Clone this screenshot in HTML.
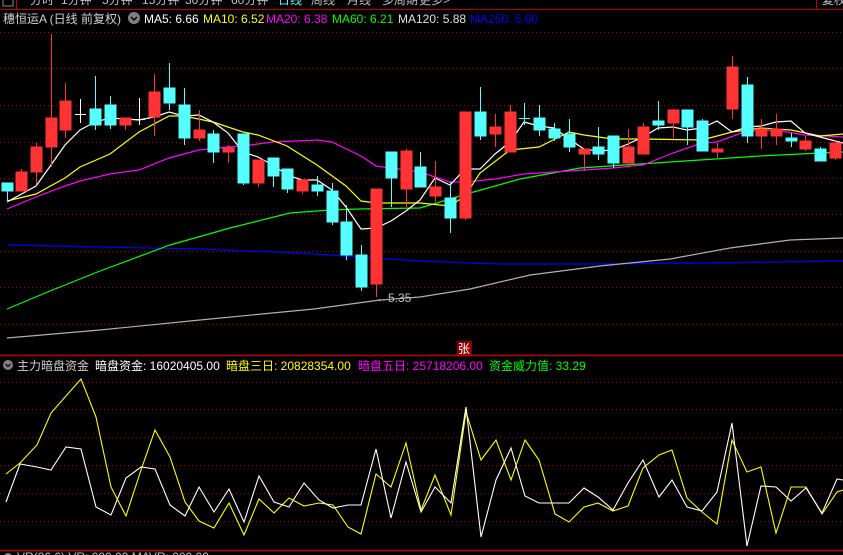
<!DOCTYPE html>
<html><head><meta charset="utf-8"><style>
html,body{margin:0;padding:0;background:#000;width:843px;height:555px;overflow:hidden}
svg{display:block}
text{font-family:"Liberation Sans","Noto Sans CJK SC",sans-serif;font-size:12px}
</style></head><body>
<svg width="843" height="555" viewBox="0 0 843 555" xmlns="http://www.w3.org/2000/svg">
<rect width="843" height="555" fill="#000"/>
<!-- top menu -->
<g fill="#c0c0c0" font-size="12">
<text x="30" y="4">分时</text><text x="61" y="4">1分钟</text><text x="102" y="4">5分钟</text><text x="142" y="4">15分钟</text><text x="185" y="4">30分钟</text><text x="231" y="4">60分钟</text><text x="278" y="4" fill="#55ffff">日线</text><text x="311" y="4">周线</text><text x="347" y="4">月线</text><text x="382" y="4">多周期</text><text x="419" y="4">更多&gt;</text>
<text x="822" y="4">复权</text></g>
<rect x="3" y="-4" width="10" height="10" fill="none" stroke="#888"/>
<line x1="0" y1="9.5" x2="843" y2="9.5" stroke="#c00000"/>
<line x1="816.5" y1="0" x2="816.5" y2="9" stroke="#c00000"/>
<line x1="16.5" y1="0" x2="16.5" y2="9" stroke="#c00000"/>
<!-- title -->
<text x="3" y="23" fill="#d0d0d0">穗恒运A (日线 前复权)</text>
<circle cx="134" cy="18" r="6" fill="#808080"/><path d="M131 17l3 3 3-3" stroke="#000" stroke-width="1.5" fill="none"/>
<text x="144" y="23" fill="#fff">MA5: 6.66</text>
<text x="203" y="23" fill="#ffff00">MA10: 6.52</text>
<text x="266" y="23" fill="#ff00ff">MA20: 6.38</text>
<text x="332" y="23" fill="#00ff00">MA60: 6.21</text>
<text x="398" y="23" fill="#e0e0e0">MA120: 5.88</text>
<text x="470" y="23" fill="#0000ff">MA250: 5.60</text>
<!-- grid -->
<g stroke="#b00000" stroke-dasharray="1,3">
<line x1="0" y1="32.5" x2="843" y2="32.5"/><line x1="0" y1="68.5" x2="843" y2="68.5"/><line x1="0" y1="105.5" x2="843" y2="105.5"/><line x1="0" y1="142.5" x2="843" y2="142.5"/><line x1="0" y1="178.5" x2="843" y2="178.5"/><line x1="0" y1="214.5" x2="843" y2="214.5"/><line x1="0" y1="251.5" x2="843" y2="251.5"/><line x1="0" y1="287.5" x2="843" y2="287.5"/><line x1="0" y1="324.5" x2="843" y2="324.5"/>
<line x1="0" y1="382.5" x2="843" y2="382.5"/><line x1="0" y1="409.5" x2="843" y2="409.5"/><line x1="0" y1="437.5" x2="843" y2="437.5"/><line x1="0" y1="465.5" x2="843" y2="465.5"/><line x1="0" y1="493.5" x2="843" y2="493.5"/><line x1="0" y1="521.5" x2="843" y2="521.5"/>
</g>
<!-- MA lines -->
<g fill="none" stroke-width="1.2">
<polyline stroke="#0000ff" points="7,245 100,247 200,249 300,253 420,261 500,264 600,264 700,263 843,261"/>
<polyline stroke="#b0b0b0" points="7,338 100,330 200,320 314,309 380,300 420,297 470,289 530,275 600,266 670,259 730,248 790,240 843,238"/>
<polyline stroke="#00ff00" points="7,309 50,291 100,271 170,245 230,228 290,213 330,210 360,209 420,208 470,193 520,179 580,168 640,164 700,160 760,156 800,154 843,152"/>
<polyline stroke="#ff00ff" points="7,209 36,197 65,186 80,181 110,174 139,170 169,158 199,150 228,147 243,146 273,142 317,140 332,142 361,156 376,166 406,170 420,172 450,182 465,182 495,179 524,174 554,172 584,170 613,168 643,165 673,153 702,143 717,142 747,131 776,130 805,135 843,137"/>
<polyline stroke="#ffff00" points="7,201 36,194 65,178 80,167 110,154 139,132 169,116 184,116 213,122 228,127 243,132 258,135 287,146 317,165 346,186 361,201 376,203 420,203 450,206 465,196 480,173 510,150 539,147 569,132 584,135 613,139 643,139 702,140 732,132 761,128 791,130 820,136 843,134"/>
<polyline stroke="#ffffff" points="7,202 36,186 51,165 65,145 80,130 95,122 110,118 125,119 139,120 154,117 169,112 184,116 199,115 213,122 228,133 243,152 258,157 273,165 287,175 302,180 317,180 332,190 346,207 361,229 376,228 391,221 406,211 420,200 435,178 450,185 465,169 480,169 495,154 510,142 524,122 539,126 554,128 569,139 584,149 598,151 613,150 628,144 643,137 658,128 673,127 687,130 702,128 717,121 732,132 747,127 761,126 776,122 791,121 805,133 820,137 843,143"/>
</g>
<!-- candles -->
<g stroke-width="1">
<g stroke="#55ffff" fill="#55ffff">
<line x1="7.5" y1="183" x2="7.5" y2="202"/><rect x="2" y="183" width="11" height="8"/>
<line x1="95.5" y1="76" x2="95.5" y2="130"/><rect x="90" y="109" width="11" height="16"/>
<line x1="110.5" y1="96" x2="110.5" y2="129"/><rect x="105" y="105" width="11" height="20"/>
<line x1="169.5" y1="63" x2="169.5" y2="110"/><rect x="164" y="88" width="11" height="15"/>
<line x1="184.5" y1="88" x2="184.5" y2="145"/><rect x="179" y="105" width="11" height="33"/>
<line x1="213.5" y1="130" x2="213.5" y2="163"/><rect x="208" y="134" width="11" height="18"/>
<line x1="243.5" y1="134" x2="243.5" y2="185"/><rect x="238" y="134" width="11" height="49"/>
<line x1="273.5" y1="158" x2="273.5" y2="187"/><rect x="268" y="158" width="11" height="18"/>
<line x1="287.5" y1="169" x2="287.5" y2="193"/><rect x="282" y="169" width="11" height="20"/>
<line x1="317.5" y1="176" x2="317.5" y2="196"/><rect x="312" y="185" width="11" height="6"/>
<line x1="332.5" y1="183" x2="332.5" y2="225"/><rect x="327" y="191" width="11" height="31"/>
<line x1="346.5" y1="205" x2="346.5" y2="260"/><rect x="341" y="222" width="11" height="33"/>
<line x1="361.5" y1="245" x2="361.5" y2="291"/><rect x="356" y="255" width="11" height="32"/>
<line x1="391.5" y1="152" x2="391.5" y2="207"/><rect x="386" y="152" width="11" height="26"/>
<line x1="420.5" y1="152" x2="420.5" y2="187"/><rect x="415" y="167" width="11" height="20"/>
<line x1="450.5" y1="182" x2="450.5" y2="233"/><rect x="445" y="198" width="11" height="20"/>
<line x1="480.5" y1="87" x2="480.5" y2="140"/><rect x="475" y="112" width="11" height="24"/>
<line x1="539.5" y1="105" x2="539.5" y2="136"/><rect x="534" y="118" width="11" height="12"/>
<line x1="554.5" y1="123" x2="554.5" y2="141"/><rect x="549" y="129" width="11" height="9"/>
<line x1="569.5" y1="119" x2="569.5" y2="152"/><rect x="564" y="134" width="11" height="13"/>
<line x1="598.5" y1="127" x2="598.5" y2="160"/><rect x="593" y="147" width="11" height="7"/>
<line x1="613.5" y1="136" x2="613.5" y2="168"/><rect x="608" y="136" width="11" height="27"/>
<line x1="658.5" y1="101" x2="658.5" y2="130"/><rect x="653" y="121" width="11" height="4"/>
<line x1="687.5" y1="110" x2="687.5" y2="145"/><rect x="682" y="110" width="11" height="17"/>
<line x1="702.5" y1="119" x2="702.5" y2="151"/><rect x="697" y="121" width="11" height="30"/>
<line x1="747.5" y1="77" x2="747.5" y2="143"/><rect x="742" y="85" width="11" height="51"/>
<line x1="791.5" y1="133" x2="791.5" y2="147"/><rect x="786" y="138" width="11" height="3"/>
<line x1="820.5" y1="147" x2="820.5" y2="161"/><rect x="815" y="149" width="11" height="12"/>
</g>
<g stroke="#ff3333" fill="#ff3333">
<line x1="21.5" y1="169" x2="21.5" y2="191"/><rect x="16" y="172" width="11" height="19"/>
<line x1="36.5" y1="143" x2="36.5" y2="184"/><rect x="31" y="147" width="11" height="25"/>
<line x1="51.5" y1="34" x2="51.5" y2="167"/><rect x="46" y="118" width="11" height="29"/>
<line x1="65.5" y1="83" x2="65.5" y2="138"/><rect x="60" y="101" width="11" height="29"/>
<line x1="125.5" y1="118" x2="125.5" y2="130"/><rect x="120" y="118" width="11" height="7"/>
<line x1="154.5" y1="74" x2="154.5" y2="136"/><rect x="149" y="92" width="11" height="25"/>
<line x1="199.5" y1="110" x2="199.5" y2="141"/><rect x="194" y="130" width="11" height="8"/>
<line x1="228.5" y1="145" x2="228.5" y2="163"/><rect x="223" y="148" width="11" height="4"/>
<line x1="258.5" y1="160" x2="258.5" y2="187"/><rect x="253" y="160" width="11" height="23"/>
<line x1="302.5" y1="180" x2="302.5" y2="194"/><rect x="297" y="180" width="11" height="11"/>
<line x1="376.5" y1="189" x2="376.5" y2="297"/><rect x="371" y="189" width="11" height="95"/>
<line x1="406.5" y1="149" x2="406.5" y2="207"/><rect x="401" y="151" width="11" height="38"/>
<line x1="435.5" y1="161" x2="435.5" y2="202"/><rect x="430" y="187" width="11" height="9"/>
<line x1="465.5" y1="112" x2="465.5" y2="220"/><rect x="460" y="112" width="11" height="106"/>
<line x1="495.5" y1="114" x2="495.5" y2="147"/><rect x="490" y="127" width="11" height="7"/>
<line x1="510.5" y1="105" x2="510.5" y2="152"/><rect x="505" y="112" width="11" height="40"/>
<line x1="584.5" y1="149" x2="584.5" y2="171"/><rect x="579" y="149" width="11" height="5"/>
<line x1="628.5" y1="129" x2="628.5" y2="167"/><rect x="623" y="147" width="11" height="16"/>
<line x1="643.5" y1="123" x2="643.5" y2="154"/><rect x="638" y="127" width="11" height="27"/>
<line x1="673.5" y1="109" x2="673.5" y2="138"/><rect x="668" y="110" width="11" height="13"/>
<line x1="717.5" y1="143" x2="717.5" y2="158"/><rect x="712" y="149" width="11" height="3"/>
<line x1="732.5" y1="56" x2="732.5" y2="119"/><rect x="727" y="67" width="11" height="42"/>
<line x1="761.5" y1="119" x2="761.5" y2="149"/><rect x="756" y="129" width="11" height="7"/>
<line x1="776.5" y1="114" x2="776.5" y2="145"/><rect x="771" y="129" width="11" height="7"/>
<line x1="805.5" y1="136" x2="805.5" y2="151"/><rect x="800" y="141" width="11" height="8"/>
<line x1="835.5" y1="140" x2="835.5" y2="160"/><rect x="830" y="143" width="11" height="15"/>
</g>
<g stroke="#fff">
<line x1="80.5" y1="99" x2="80.5" y2="123"/><line x1="75" y1="114.5" x2="86" y2="114.5"/>
<line x1="139.5" y1="98" x2="139.5" y2="125"/><line x1="134" y1="119.5" x2="145" y2="119.5"/>
</g>
<g stroke="#55ffff"><line x1="524.5" y1="103" x2="524.5" y2="125"/><line x1="519" y1="118.5" x2="530" y2="118.5"/></g>
</g>
<text x="376" y="302" fill="#c0c0c0" font-size="11">←5.35</text>
<!-- badge -->
<rect x="457" y="341" width="15" height="14" fill="#900000"/>
<text x="458" y="353" fill="#fff" font-size="12">张</text>
<line x1="0" y1="355.5" x2="843" y2="355.5" stroke="#c00000" stroke-width="1.5"/>
<!-- lower header -->
<circle cx="8" cy="365" r="5" fill="#808080"/><path d="M5.5 364l2.5 2.5 2.5-2.5" stroke="#000" stroke-width="1.2" fill="none"/>
<text x="17" y="370" fill="#d0d0d0">主力暗盘资金</text>
<text x="95" y="370" fill="#fff">暗盘资金: 16020405.00</text>
<text x="226" y="370" fill="#ffff00">暗盘三日: 20828354.00</text>
<text x="358" y="370" fill="#ff00ff">暗盘五日: 25718206.00</text>
<text x="489" y="370" fill="#00ff00">资金威力值: 33.29</text>
<!-- lower lines -->
<g fill="none" stroke-width="1.1">
<polyline stroke="#ffff00" points="6,474 20,463 37,445 51,413 81,379 96,417 111,487 126,516 141,470 155,430 170,457 185,502 199,521 214,528 229,503 244,535 259,499 274,513 289,498 304,506 319,503 333,505 348,527 361,534 376,474 391,487 406,443 421,510 435,475 451,515 466,412 481,460 496,440 511,480 525,440 539,460 555,514 569,522 584,507 598,503 613,511 628,506 643,468 659,455 672,450 687,498 702,512 717,524 732,440 747,472 761,467 776,533 791,487 806,487 822,514 837,492 843,490"/>
<polyline stroke="#ffffff" points="6,502 20,464 37,467 51,470 66,447 81,449 96,507 111,515 126,478 141,467 155,469 170,505 185,516 199,487 214,512 229,489 244,522 259,476 274,502 289,507 304,483 319,500 333,508 348,505 361,505 376,449 391,518 406,462 421,512 435,487 451,503 466,407 481,537 496,480 511,448 525,496 539,503 555,503 569,503 584,488 598,497 613,510 628,483 643,460 659,497 672,480 687,507 702,511 717,492 732,423 747,546 761,486 776,487 791,501 806,488 822,513 837,479 843,480"/>
</g>
<line x1="0" y1="550.5" x2="843" y2="550.5" stroke="#c00000" stroke-width="1.5"/>
<circle cx="8" cy="557" r="4" fill="#808080"/>
<text x="17" y="561" fill="#c0c0c0" font-size="11">VR(26,6)  VR: 000.00  MAVR: 000.00</text>
</svg>
</body></html>
